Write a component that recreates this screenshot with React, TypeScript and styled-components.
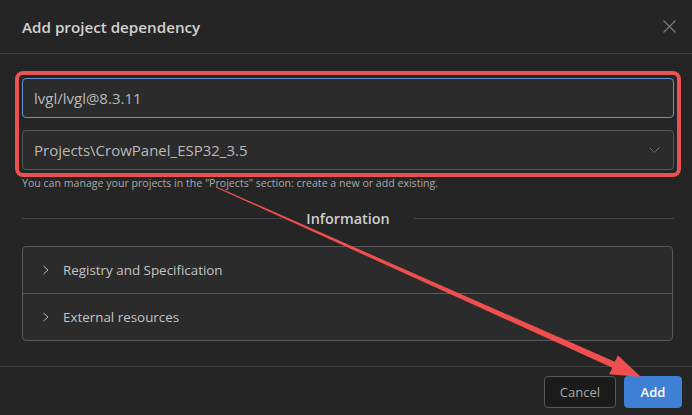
import React from "react";
import styled, { createGlobalStyle } from "styled-components";

const GlobalStyle = createGlobalStyle`
  html, body {
    margin: 0;
    padding: 0;
    background: #252525;
  }
  body {
    font-family: "Open Sans", "Noto Sans", sans-serif;
    color: #c8c8c8;
  }
`;

const Dialog = styled.div`
  position: relative;
  width: 692px;
  height: 415px;
  background: #252525;
  display: flex;
  flex-direction: column;
  overflow: hidden;
`;

const Header = styled.div`
  height: 53px;
  display: flex;
  align-items: center;
  justify-content: space-between;
  padding: 0 15px 0 22px;
  border-bottom: 1px solid #3d3d3d;
  flex-shrink: 0;
`;

const Title = styled.h1`
  margin: 0;
  font-size: 15.2px;
  font-weight: 600;
  color: #d2d2d2;
`;

const CloseButton = styled.button`
  width: 16px;
  height: 16px;
  padding: 0;
  border: none;
  background: none;
  display: flex;
  align-items: center;
  justify-content: center;
  cursor: pointer;
`;

const Body = styled.div`
  flex: 1;
  padding: 24px 18px 0 22px;
  display: flex;
  flex-direction: column;
`;

const Fields = styled.div`
  display: flex;
  flex-direction: column;
  gap: 12px;
  outline: 4px solid #ea5252;
  outline-offset: 3px;
  border-radius: 1px;
`;

const Field = styled.div<{ $focused?: boolean }>`
  height: 40px;
  box-sizing: border-box;
  border: 1px solid ${(p) => (p.$focused ? "#5f93d0" : "#575757")};
  border-radius: 4px;
  background: #2b2b2b;
  display: flex;
  align-items: center;
  justify-content: space-between;
  padding: 0 13px 0 11px;
  font-size: 15px;
  color: #b9b9b9;
`;

const Hint = styled.div`
  margin-top: 6px;
  font-size: 10.6px;
  color: #a9a9a9;
`;

const SectionTitle = styled.div`
  margin-top: 19px;
  display: flex;
  align-items: center;
  gap: 24px;
  font-size: 14.4px;
  font-weight: 600;
  color: #cfcfcf;
  &::before,
  &::after {
    content: "";
    flex: 1;
    height: 1px;
    background: #474747;
  }
`;

const Accordion = styled.div`
  margin-top: 18px;
  border: 1px solid #585858;
  border-radius: 4px;
  background: #2b2b2b;
  width: 651px;
  box-sizing: border-box;
`;

const AccordionRow = styled.div`
  height: 46px;
  display: flex;
  align-items: center;
  gap: 13px;
  padding-left: 19px;
  font-size: 13.4px;
  color: #c4c4c4;
  & + & {
    border-top: 1px solid #585858;
  }
`;

const Footer = styled.div`
  height: 48px;
  border-top: 1px solid #3d3d3d;
  display: flex;
  align-items: center;
  justify-content: flex-end;
  gap: 8px;
  padding: 0 10px 0 0;
  flex-shrink: 0;
`;

const Button = styled.button<{ $primary?: boolean }>`
  height: 32px;
  margin-top: 1px;
  box-sizing: border-box;
  padding: 0 15px;
  border-radius: 4px;
  font-family: inherit;
  font-size: 13px;
  font-weight: ${(p) => (p.$primary ? 600 : 400)};
  border: 1px solid ${(p) => (p.$primary ? "#3d80d6" : "#5a5a5a")};
  background: ${(p) => (p.$primary ? "#3d80d6" : "#1b1b1b")};
  color: ${(p) => (p.$primary ? "#ffffff" : "#a8a8a8")};
  min-width: ${(p) => (p.$primary ? "58px" : "72px")};
`;

const Annotation = styled.svg`
  position: absolute;
  left: 0;
  top: 0;
  pointer-events: none;
`;

const Chevron = ({ dir }: { dir: "right" | "down" }) =>
  dir === "right" ? (
    <svg width="8" height="10" viewBox="0 0 8 10">
      <path d="M1.5 1 L6 5 L1.5 9" fill="none" stroke="#b5b5b5" strokeWidth="1" />
    </svg>
  ) : (
    <svg width="11" height="7" viewBox="0 0 11 7">
      <path d="M0.5 0.5 L5.5 5.5 L10.5 0.5" fill="none" stroke="#6c6c6c" strokeWidth="1" />
    </svg>
  );

export default function App() {
  // arrow from the hint text to the Add button
  const sx = 216, sy = 187, tx = 641, ty = 377;
  const dx = tx - sx, dy = ty - sy;
  const len = Math.hypot(dx, dy);
  const ux = dx / len, uy = dy / len;
  const px = -uy, py = ux;
  const bx = tx - ux * 30, by = ty - uy * 30;
  const pt = (x: number, y: number) => `${x.toFixed(1)},${y.toFixed(1)}`;
  const arrow = [
    pt(sx + px * 0.6, sy + py * 0.6),
    pt(bx + px * 3.2, by + py * 3.2),
    pt(bx + px * 10.5, by + py * 10.5),
    pt(tx, ty),
    pt(bx - px * 10.5, by - py * 10.5),
    pt(bx - px * 3.2, by - py * 3.2),
    pt(sx - px * 0.6, sy - py * 0.6),
  ].join(" ");

  return (
    <>
      <GlobalStyle />
      <Dialog>
        <Header>
          <Title>Add project dependency</Title>
          <CloseButton aria-label="Close">
            <svg width="13" height="13" viewBox="0 0 13 13">
              <path d="M0.5 0.5 L12.5 12.5 M12.5 0.5 L0.5 12.5" stroke="#7a7a7a" strokeWidth="1.2" />
            </svg>
          </CloseButton>
        </Header>
        <Body>
          <Fields>
            <Field $focused>lvgl/lvgl@8.3.11</Field>
            <Field>
              <span>Projects\CrowPanel_ESP32_3.5</span>
              <Chevron dir="down" />
            </Field>
          </Fields>
          <Hint>
            You can manage your projects in the "Projects" section: create a new or add existing.
          </Hint>
          <SectionTitle>Information</SectionTitle>
          <Accordion>
            <AccordionRow>
              <Chevron dir="right" />
              Registry and Specification
            </AccordionRow>
            <AccordionRow>
              <Chevron dir="right" />
              External resources
            </AccordionRow>
          </Accordion>
        </Body>
        <Footer>
          <Button>Cancel</Button>
          <Button $primary>Add</Button>
        </Footer>
        <Annotation width="692" height="415">
          <polygon points={arrow} fill="#ef4f4f" />
        </Annotation>
      </Dialog>
    </>
  );
}
